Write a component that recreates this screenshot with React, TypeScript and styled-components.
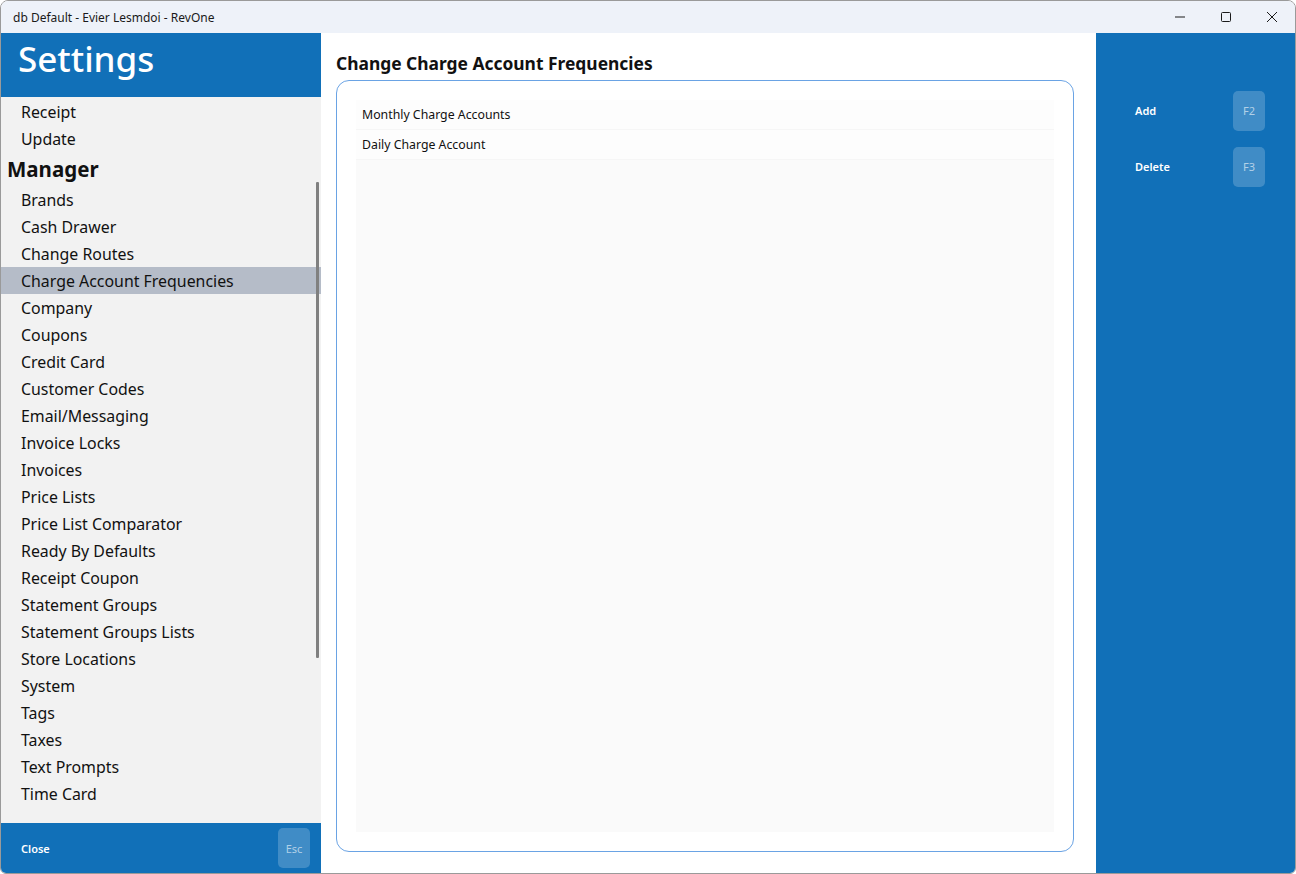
import React from "react";
import styled, { createGlobalStyle } from "styled-components";

const GlobalStyle = createGlobalStyle`
  html, body { margin: 0; padding: 0; background: #ffffff; }
  body { font-family: "Noto Sans", "Open Sans", sans-serif; }
  * { box-sizing: border-box; }
`;

const BLUE = "#1170b8";

const Window = styled.div`
  width: 1296px;
  height: 874px;
  display: flex;
  flex-direction: column;
  border: 1px solid #9a9a9a;
  border-radius: 8px 8px 6px 6px;
  overflow: hidden;
  background: #ffffff;
`;

const TitleBar = styled.div`
  height: 32px;
  flex: none;
  display: flex;
  align-items: center;
  background: #eef2f9;
  padding-left: 12px;
`;

const TitleText = styled.div`
  flex: 1;
  font-size: 12px;
  color: #1a1a1a;
`;

const WinButton = styled.div`
  width: 46px;
  height: 32px;
  display: flex;
  align-items: center;
  justify-content: center;
  color: #1a1a1a;
`;

const Body = styled.div`
  flex: 1;
  display: flex;
  min-height: 0;
`;

const Sidebar = styled.div`
  width: 320px;
  flex: none;
  display: flex;
  flex-direction: column;
`;

const SideHeader = styled.div`
  height: 64px;
  background: ${BLUE};
  color: #ffffff;
  font-size: 35px;
  font-weight: 500;
  padding-left: 17px;
  display: flex;
  align-items: center;
  line-height: 1;
  padding-bottom: 14px;
`;

const SideList = styled.div`
  flex: 1;
  background: #f2f2f2;
  position: relative;
  padding-top: 1px;
`;

const Item = styled.div<{ $active?: boolean }>`
  height: 27px;
  display: flex;
  align-items: center;
  padding-left: 20px;
  font-size: 15.9px;
  color: #111111;
  background: ${(p) => (p.$active ? "#b5bcc8" : "transparent")};
`;

const Group = styled.div`
  height: 34px;
  display: flex;
  align-items: center;
  padding-left: 6px;
  font-size: 20.5px;
  font-weight: 700;
  color: #111111;
`;

const ScrollThumb = styled.div`
  position: absolute;
  right: 2px;
  top: 85px;
  width: 3px;
  height: 476px;
  background: #808080;
  border-radius: 1px;
`;

const SideFooter = styled.div`
  height: 50px;
  background: ${BLUE};
  display: flex;
  align-items: center;
  justify-content: space-between;
  padding: 0 11px 0 20px;
`;

const ActionLabel = styled.span`
  font-size: 11px;
  font-weight: 600;
  color: #ffffff;
`;

const KeyCap = styled.div`
  width: 32px;
  height: 40px;
  border-radius: 5px;
  background: rgba(255, 255, 255, 0.2);
  color: rgba(255, 255, 255, 0.6);
  font-size: 11px;
  display: flex;
  align-items: center;
  justify-content: center;
`;

const Main = styled.div`
  flex: 1;
  display: flex;
  flex-direction: column;
  padding: 13px 22px 21px 15px;
  background: #ffffff;
`;

const MainTitle = styled.h1`
  margin: 0;
  height: 34px;
  display: flex;
  align-items: center;
  font-size: 17.4px;
  font-weight: 700;
  color: #111111;
`;

const Frame = styled.div`
  flex: 1;
  border: 1px solid #6aa3e4;
  border-radius: 13px;
  padding: 19px;
  display: flex;
`;

const ListBox = styled.div`
  flex: 1;
  background: #fafafa;
`;

const Row = styled.div`
  height: 30px;
  display: flex;
  align-items: center;
  padding-left: 6px;
  font-size: 12.3px;
  color: #111111;
  background: #fdfdfd;
  border-bottom: 1px solid #f6f6f6;
`;

const RightPanel = styled.div`
  width: 199px;
  flex: none;
  background: ${BLUE};
  padding: 58px 30px 0 39px;
  display: flex;
  flex-direction: column;
  gap: 17px;
`;

const ActionRow = styled.div`
  height: 39px;
  display: flex;
  align-items: center;
  justify-content: space-between;
`;

const sidebarItemsTop = ["Receipt", "Update"];
const managerItems = [
  "Brands",
  "Cash Drawer",
  "Change Routes",
  "Charge Account Frequencies",
  "Company",
  "Coupons",
  "Credit Card",
  "Customer Codes",
  "Email/Messaging",
  "Invoice Locks",
  "Invoices",
  "Price Lists",
  "Price List Comparator",
  "Ready By Defaults",
  "Receipt Coupon",
  "Statement Groups",
  "Statement Groups Lists",
  "Store Locations",
  "System",
  "Tags",
  "Taxes",
  "Text Prompts",
  "Time Card",
];

export default function App() {
  return (
    <>
      <GlobalStyle />
      <Window>
        <TitleBar>
          <TitleText>db Default - Evier Lesmdoi - RevOne</TitleText>
          <WinButton>
            <svg width="12" height="12" viewBox="0 0 12 12">
              <line x1="1" y1="6" x2="11" y2="6" stroke="#1a1a1a" strokeWidth="1" />
            </svg>
          </WinButton>
          <WinButton>
            <svg width="12" height="12" viewBox="0 0 12 12">
              <rect x="1.5" y="1.5" width="9" height="9" rx="1" fill="none" stroke="#1a1a1a" strokeWidth="1" />
            </svg>
          </WinButton>
          <WinButton>
            <svg width="12" height="12" viewBox="0 0 12 12">
              <path d="M1 1 L11 11 M11 1 L1 11" stroke="#1a1a1a" strokeWidth="1" />
            </svg>
          </WinButton>
        </TitleBar>
        <Body>
          <Sidebar>
            <SideHeader>Settings</SideHeader>
            <SideList>
              {sidebarItemsTop.map((t) => (
                <Item key={t}>{t}</Item>
              ))}
              <Group>Manager</Group>
              {managerItems.map((t) => (
                <Item key={t} $active={t === "Charge Account Frequencies"}>
                  {t}
                </Item>
              ))}
              <ScrollThumb />
            </SideList>
            <SideFooter>
              <ActionLabel>Close</ActionLabel>
              <KeyCap>Esc</KeyCap>
            </SideFooter>
          </Sidebar>
          <Main>
            <MainTitle>Change Charge Account Frequencies</MainTitle>
            <Frame>
              <ListBox>
                <Row>Monthly Charge Accounts</Row>
                <Row>Daily Charge Account</Row>
              </ListBox>
            </Frame>
          </Main>
          <RightPanel>
            <ActionRow>
              <ActionLabel>Add</ActionLabel>
              <KeyCap>F2</KeyCap>
            </ActionRow>
            <ActionRow>
              <ActionLabel>Delete</ActionLabel>
              <KeyCap>F3</KeyCap>
            </ActionRow>
          </RightPanel>
        </Body>
      </Window>
    </>
  );
}
